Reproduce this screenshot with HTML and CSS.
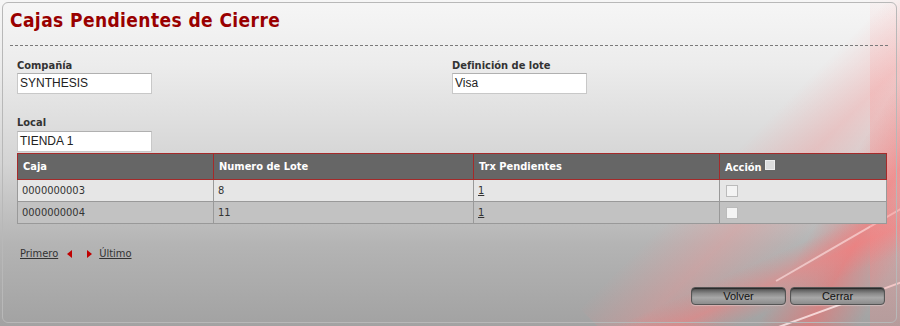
FILE: index.html
```html
<!DOCTYPE html>
<html lang="es">
<head>
<meta charset="utf-8">
<title>Cajas Pendientes de Cierre</title>
<link rel="stylesheet" href="styles.css">
</head>
<body>
<div class="bg">
  <div class="streak s1"></div>
  <div class="streak s2"></div>
  <div class="streak s3"></div>
  <div class="streak s4"></div>
  <div class="streak s5"></div>
  <div class="streak s6"></div>
</div>
<div class="panel">
  <h1 class="title">Cajas Pendientes de Cierre</h1>
  <div class="sep"></div>
  <div class="form">
    <div class="field">
      <label class="lbl">Compañía</label>
      <div class="inp">SYNTHESIS</div>
    </div>
    <div class="field">
      <label class="lbl">Definición de lote</label>
      <div class="inp">Visa</div>
    </div>
    <div class="field local">
      <label class="lbl">Local</label>
      <div class="inp">TIENDA 1</div>
    </div>
  </div>
  <table class="grid">
    <thead>
      <tr>
        <th class="c1">Caja</th>
        <th class="c2">Numero de Lote</th>
        <th class="c3">Trx Pendientes</th>
        <th class="c4">Acción <span class="chk hdr"></span></th>
      </tr>
    </thead>
    <tbody>
      <tr class="odd">
        <td>0000000003</td>
        <td>8</td>
        <td><a class="lnk">1</a></td>
        <td><span class="chk"></span></td>
      </tr>
      <tr class="even">
        <td>0000000004</td>
        <td>11</td>
        <td><a class="lnk">1</a></td>
        <td><span class="chk"></span></td>
      </tr>
    </tbody>
  </table>
  <div class="pager">
    <a class="lnk">Primero</a>
    <span class="tri left"></span>
    <span class="tri right"></span>
    <a class="lnk">Último</a>
  </div>
  <div class="actions">
    <button class="btn">Volver</button>
    <button class="btn">Cerrar</button>
  </div>
</div>
</body>
</html>
```

FILE: styles.css
```css
html, body {
  margin: 0;
  padding: 0;
}
body {
  width: 900px;
  height: 326px;
  overflow: hidden;
  position: relative;
  font-family: "DejaVu Sans Condensed", "DejaVu Sans", sans-serif;
  background: linear-gradient(180deg, #f6f6f6 0%, #ececec 20%, #d4d4d4 50%, #b4b4b4 75%, #a2a2a2 100%);
}
.bg {
  position: absolute;
  inset: 0;
  overflow: hidden;
  z-index: 0;
}
.streak {
  position: absolute;
  transform-origin: center;
}
.s1 {
  left: 740px; top: -80px; width: 110px; height: 500px;
  transform: rotate(45deg);
  background: linear-gradient(90deg, rgba(255,120,120,0) 0%, rgba(255,140,140,0.3) 50%, rgba(255,120,120,0) 100%);
}
.s2 {
  left: 830px; top: 20px; width: 90px; height: 380px;
  transform: rotate(30deg);
  background: linear-gradient(90deg, rgba(255,90,90,0) 0%, rgba(255,100,100,0.5) 50%, rgba(255,90,90,0) 100%);
}
.s3 {
  left: 600px; top: 250px; width: 380px; height: 50px;
  transform: rotate(-24deg);
  background: linear-gradient(180deg, rgba(255,110,110,0) 0%, rgba(255,120,120,0.45) 50%, rgba(255,110,110,0) 100%);
}
.s4 {
  left: 700px; top: 300px; width: 300px; height: 2px;
  transform: rotate(-20deg);
  background: rgba(255,235,235,0.8);
}
.s5 {
  left: 760px; top: 220px; width: 240px; height: 2px;
  transform: rotate(-30deg);
  background: rgba(255,230,230,0.6);
}
.s6 {
  left: 870px; top: 0; width: 30px; height: 326px;
  background: linear-gradient(180deg, rgba(255,150,150,0.05) 0%, rgba(255,130,130,0.35) 60%, rgba(255,130,130,0.2) 100%);
}
.panel {
  position: relative;
  z-index: 1;
  box-sizing: border-box;
  margin: 2px 0 0 2px;
  width: 895px;
  height: 321px;
  border: 1px solid #b8b8b8;
  border-radius: 6px;
  padding: 6px 8px 0 7px;
  display: flex;
  flex-direction: column;
}
.title {
  margin: 0;
  font-size: 19px;
  line-height: 22px;
  font-weight: bold;
  color: #990000;
  letter-spacing: 0.4px;
}
.sep {
  margin-top: 14px;
  border-top: 1px dashed #7a7a7a;
}
.form {
  display: grid;
  grid-template-columns: 435px 1fr;
  row-gap: 22px;
  padding: 13px 0 0 7px;
}
.field {
  display: flex;
  flex-direction: column;
}
.lbl {
  font-size: 11px;
  font-weight: bold;
  color: #333;
  line-height: 13px;
  margin-bottom: 1px;
}
.local .lbl {
  margin-bottom: 2px;
}
.inp {
  box-sizing: border-box;
  width: 135px;
  height: 21px;
  background: #fff;
  border: 1px solid #c8c8c8;
  border-top-color: #b0b0b0;
  font-family: "Liberation Sans", Arial, sans-serif;
  font-size: 12px;
  color: #222;
  line-height: 19px;
  padding-left: 2px;
}
.grid {
  margin: 1px 0 0 7px;
  width: 870px;
  border-collapse: collapse;
  font-size: 11px;
}
.grid th {
  background: #666;
  color: #fff;
  text-align: left;
  font-weight: bold;
  height: 25px;
  padding: 0 5px;
  border: 1px solid #a52a2a;
  line-height: 13px;
}
.grid td {
  border: 1px solid #999;
  color: #333;
  height: 21px;
  padding: 0 4px;
  line-height: 13px;
}
.c1 { width: 185px; }
.c2 { width: 249px; }
.c3 { width: 235px; }
.odd td { background: #e6e6e6; }
.even td { background: #c2c2c2; }
.lnk {
  color: #333;
  text-decoration: underline;
}
.chk {
  display: inline-block;
  width: 10px;
  height: 10px;
  background: #f4f4f4;
  border: 1px solid #bbb;
  vertical-align: middle;
  margin-left: 2px;
}
.chk.hdr {
  width: 8px;
  height: 8px;
  background: #ddd;
  border-color: #eee;
  margin-left: 0;
  vertical-align: 1px;
}
.pager {
  display: flex;
  align-items: center;
  margin: 23px 0 0 10px;
  font-size: 11px;
  line-height: 14px;
}
.tri {
  width: 0;
  height: 0;
  border-top: 4px solid transparent;
  border-bottom: 4px solid transparent;
}
.tri.left {
  border-right: 5px solid #c00000;
  margin-left: 9px;
}
.tri.right {
  border-left: 5px solid #c00000;
  margin-left: 15px;
  margin-right: 7px;
}
.actions {
  display: flex;
  justify-content: flex-end;
  gap: 4px;
  margin-top: 26px;
  padding-right: 3px;
}
.btn {
  box-sizing: border-box;
  width: 95px;
  height: 18px;
  border: 1px solid #555;
  border-radius: 4px;
  background: linear-gradient(180deg, #4a4a4a 0%, #8a8a8a 35%, #a8a8a8 60%, #8c8c8c 100%);
  box-shadow: inset 0 1px 1px rgba(0,0,0,0.5), 0 1px 1px rgba(255,255,255,0.3);
  font-family: "Liberation Sans", Arial, sans-serif;
  font-size: 11px;
  color: #111;
  padding: 0;
  line-height: 16px;
}
```
